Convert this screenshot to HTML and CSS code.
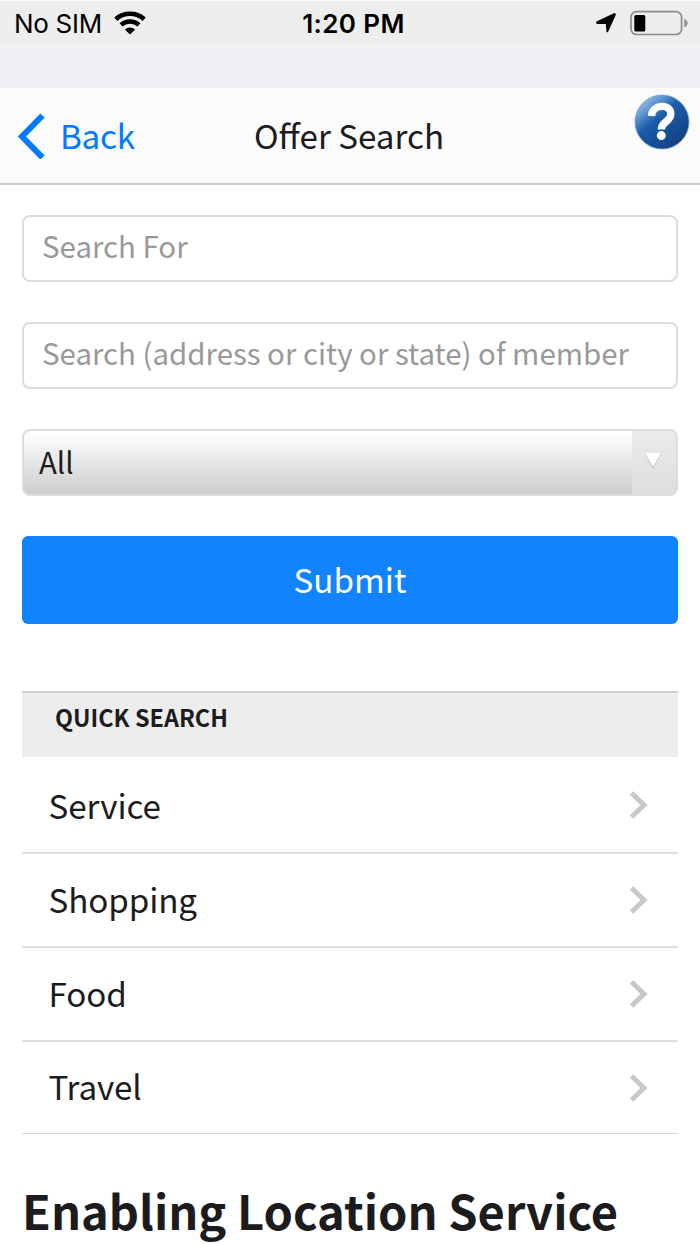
FILE: index.html
```html
<!DOCTYPE html>
<html lang="en">
<head>
  <meta charset="UTF-8">
  <meta name="viewport" content="width=device-width, initial-scale=1.0">
  <title>Offer Search</title>
  <link rel="stylesheet" href="styles.css">
</head>
<body>

  <!-- Status bar -->
  <div class="status-bar">
    <div class="status-left">
      <span class="carrier">No SIM</span>
      <svg class="wifi" width="32" height="24" viewBox="0 0 32 24">
        <path d="M1.800 8.200C9.800 1 22.200 1 30.200 8.200" fill="none" stroke="#000" stroke-width="4.600"/>
        <path d="M7 13.800C12 9.300 20 9.300 25 13.800" fill="none" stroke="#000" stroke-width="4.400"/>
        <path d="M16 23.500L10.800 18.400C14 15.700 18 15.700 21.200 18.400Z"/>
      </svg>
    </div>
    <span class="clock">1:20 PM</span>
    <div class="status-right">
      <svg width="20" height="20" viewBox="0 0 20 20">
        <path d="M.5 8.600L17.800.3Q20.300-.3 19.700 2L12.300 18.600Q11.200 20.300 10.500 18.500L9.800 10.900L1.500 10.900Q-.8 10.200.5 8.600Z"/>
      </svg>
      <svg class="battery" width="58" height="26" viewBox="0 0 58 26">
        <rect x="1" y="1.700" width="50.600" height="22.800" rx="5.500" fill="none" stroke="#8c8c8c" stroke-width="1.700"/>
        <rect x="4.300" y="5" width="11" height="16.500" rx="1.500"/>
        <path d="M54.300 9C58.600 10.800 58.600 15.800 54.300 17.500Z" fill="#8c8c8c"/>
      </svg>
    </div>
  </div>

  <!-- Header -->
  <header class="nav-bar">
    <a href="#" class="back">
      <svg width="28" height="48" viewBox="0 0 28 48">
        <path d="M25.500 4.500L5 25.500L25.500 46.500" fill="none" stroke="#007aff" stroke-width="6"/>
      </svg>
      <span>Back</span>
    </a>
    <h1>Offer Search</h1>
    <a href="#" class="help">
      <svg width="56" height="56" viewBox="0 0 56 56">
        <defs>
          <linearGradient id="ball" x1="0.1" y1="0.05" x2="0.8" y2="0.9">
            <stop offset="0" stop-color="#a3c6ee"/>
            <stop offset="0.22" stop-color="#6499d4"/>
            <stop offset="0.45" stop-color="#1b5cab"/>
            <stop offset="0.75" stop-color="#164d94"/>
            <stop offset="1" stop-color="#16427f"/>
          </linearGradient>
        </defs>
        <circle cx="28" cy="28" r="27" fill="url(#ball)" stroke="#6a9bd2" stroke-width="0.800"/>
        <path d="M17.500 22C18 9.800 36.800 9.300 36.800 20C36.800 28 27.500 27 27.300 35.500" fill="none" stroke="#fff" stroke-width="7.400"/>
        <circle cx="27.300" cy="41.600" r="4.500" fill="#fff"/>
      </svg>
    </a>
  </header>

  <main class="content">
    <form class="search-form">
      <input type="text" placeholder="Search For">
      <input type="text" placeholder="Search (address or city or state) of member">
      <div class="select">
        <span class="select-value">All</span>
        <span class="select-arrow">
          <svg width="18" height="17" viewBox="0 0 18 17">
            <path d="M1 1L9 16L17 1Z" fill="#bdbdbd"/>
            <path d="M1 0H17L9 14Z" fill="#fff"/>
          </svg>
        </span>
      </div>
      <button type="button">Submit</button>
    </form>

    <!-- Quick search categories -->
    <section class="quick-search">
      <h2>QUICK SEARCH</h2>
      <ul>
        <li><span>Service</span><svg width="20" height="30" viewBox="0 0 20 30"><path d="M2.500 3L15 15L2.500 27" fill="none" stroke="#c7c7cc" stroke-width="5"/></svg></li>
        <li><span>Shopping</span><svg width="20" height="30" viewBox="0 0 20 30"><path d="M2.500 3L15 15L2.500 27" fill="none" stroke="#c7c7cc" stroke-width="5"/></svg></li>
        <li><span>Food</span><svg width="20" height="30" viewBox="0 0 20 30"><path d="M2.500 3L15 15L2.500 27" fill="none" stroke="#c7c7cc" stroke-width="5"/></svg></li>
        <li><span>Travel</span><svg width="20" height="30" viewBox="0 0 20 30"><path d="M2.500 3L15 15L2.500 27" fill="none" stroke="#c7c7cc" stroke-width="5"/></svg></li>
      </ul>
    </section>

    <h2 class="section-title">Enabling Location Service</h2>
  </main>

</body>
</html>
```
FILE: styles.css
```css
* {
  box-sizing: border-box;
}
body {
  font-family: "Noto Sans CJK SC", sans-serif;
  margin: 0;
  height: 1244px;
  overflow: hidden;
  background-color: #fff;
  color: #1c1c1e;
}
h1, h2, ul {
  margin: 0;
  padding: 0;
}
.status-bar {
  height: 88px;
  padding: 1px 12px 0 14px;
  display: grid;
  grid-template-columns: 1fr auto 1fr;
  align-items: start;
  background: linear-gradient(#f8f8f8 1px, #ededed 1px, #ededed 43px, #efeff4 44px);
  font-family: Inter, sans-serif;
  font-size: 26px;
  line-height: 45px;
  color: #000;
}
.status-left, .status-right {
  display: flex;
  align-items: center;
  height: 44px;
}
.carrier {
  letter-spacing: -0.3px;
}
.wifi {
  margin-left: 12px;
}
.clock {
  padding-left: 5px;
  font-weight: 600;
  letter-spacing: 0.4px;
}
.status-right {
  justify-content: flex-end;
  gap: 14px;
}
.nav-bar {
  height: 97px;
  display: grid;
  grid-template-columns: 1fr auto 1fr;
  align-items: center;
  background-color: #fbfbfb;
  border-bottom: 2px solid #c9cbca;
}
.back {
  display: flex;
  align-items: center;
  gap: 15px;
  padding: 0 0 2px 17px;
  color: #007aff;
  font-size: 33.2px;
  line-height: 48px;
  letter-spacing: -0.2px;
  text-decoration: none;
}
.nav-bar h1 {
  padding: 0 2px 2px 0;
  font-size: 33.2px;
  font-weight: 400;
  line-height: 48px;
}
.help {
  align-self: start;
  justify-self: end;
  height: 56px;
  margin: 6px 10px 0 0;
}
.content {
  padding: 30px 22px 0;
}
.search-form {
  display: flex;
  flex-direction: column;
  gap: 40px;
}
.search-form input {
  height: 67px;
  width: 100%;
  padding: 0 18px 8px;
  border: 2px solid #dcdddd;
  border-radius: 8px;
  font-family: inherit;
  font-size: 29.45px;
}
.search-form input::placeholder {
  color: #999;
}
.select {
  height: 67px;
  display: flex;
  border: 2px solid #dcdddd;
  border-radius: 8px;
  background: linear-gradient(#fff, #f6f6f6 20%, #ccc);
  overflow: hidden;
}
.select-value {
  flex-grow: 1;
  padding-left: 15px;
  font-size: 29.4px;
  line-height: 61px;
}
.select-arrow {
  width: 44px;
  padding: 22px 0 0 12px;
  background: linear-gradient(#ebebeb, #dedede);
  line-height: 0;
}
.search-form button {
  height: 88px;
  padding: 0 0 3px;
  border: none;
  border-radius: 6px;
  background-color: #1384ff;
  color: #fff;
  font-family: inherit;
  font-size: 33.2px;
}
.quick-search {
  margin-top: 67px;
}
.quick-search h2 {
  height: 66px;
  padding-left: 33px;
  border-top: 2px solid #d0d0d1;
  background-color: #ededed;
  font-size: 23.4px;
  line-height: 49px;
}
.quick-search ul {
  list-style: none;
}
.quick-search li {
  height: 94px;
  display: flex;
  align-items: center;
  justify-content: space-between;
  padding: 0 29px 0 26.5px;
  border-bottom: 2px solid #dedfdf;
  font-size: 33.2px;
  letter-spacing: -0.1px;
}
.quick-search li span {
  padding-bottom: 4px;
}
.quick-search li:first-child {
  height: 97px;
}
.quick-search li:first-child span {
  padding-bottom: 1px;
}
.quick-search li:last-child {
  height: 92px;
  border-bottom: 1px solid #d6d7d7;
}
.section-title {
  margin-top: 48px;
  font-size: 47px;
  line-height: 56px;
  white-space: nowrap;
}
```
